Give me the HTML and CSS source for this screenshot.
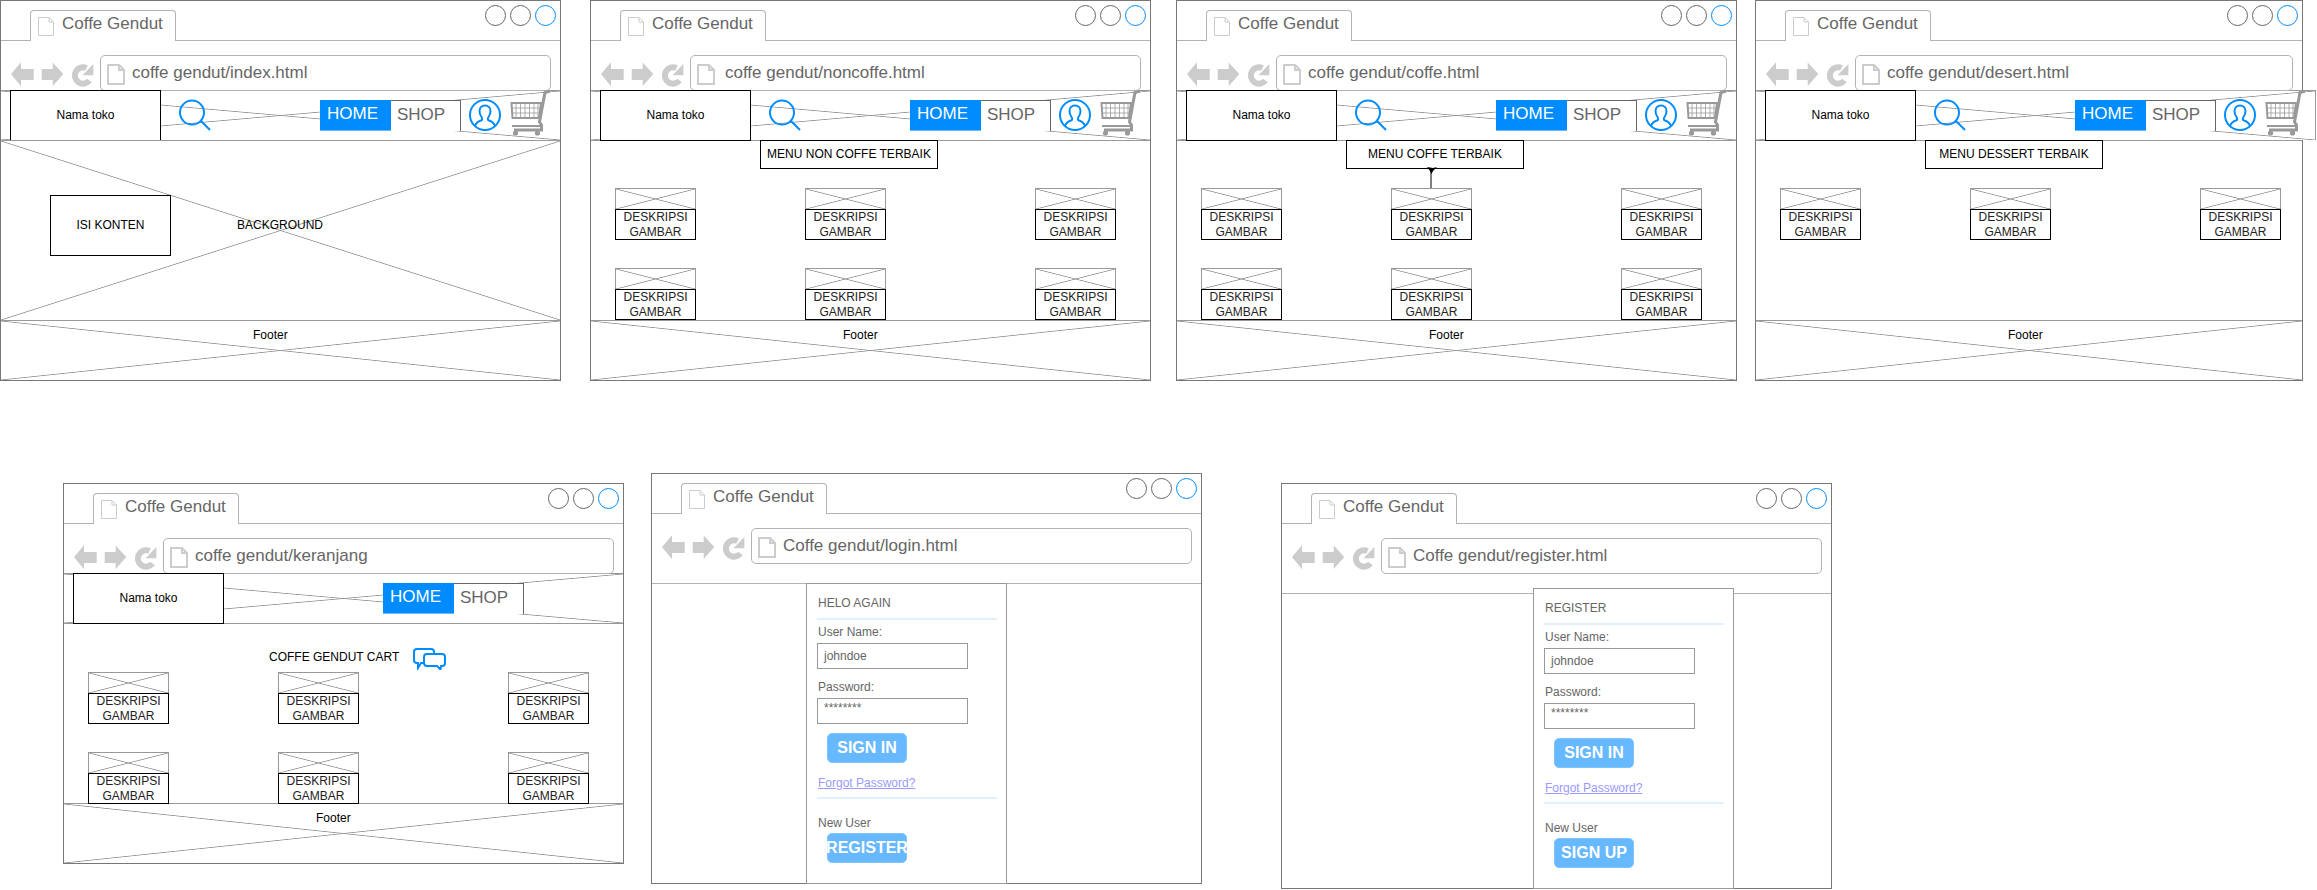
FILE: index.html
```html
<!DOCTYPE html>
<html lang="en">
<head>
  <meta charset="UTF-8">
  <meta name="viewport" content="width=device-width, initial-scale=1.0">
  <title>Coffe Gendut wireframes</title>
  <link rel="stylesheet" href="styles.css">
</head>
<body>

<!-- shared icons -->
<svg class="icon-defs" width="0" height="0">
  <symbol id="icon-browser" viewBox="0 0 90 30">
    <polygon fill="#ccc" points="1,14 11,2.3 11,9 23.7,9 23.7,20 11,20 11,26.3"/>
    <polygon fill="#ccc" points="31.7,9 42.7,9 42.7,2.5 53.3,14 42.7,26 42.7,20 31.7,20"/>
    <path fill="none" stroke="#ccc" stroke-width="6" d="M76.5 8 A8.2 8.2 0 1 0 79.5 20.5"/>
    <polygon fill="#ccc" points="83.4,4 83.4,15.3 72.5,15.3"/>
  </symbol>
  <symbol id="icon-page" viewBox="0 0 18 21">
    <path fill="#fff" stroke="#ccc" stroke-width="2" d="M1 1 H12 L17 6 V20 H1 Z M12 1 V6 H17"/>
  </symbol>
  <symbol id="icon-tabpage" viewBox="0 0 16 19">
    <path fill="#fff" stroke="#ccc" d="M.5 .5 H11 L15.5 5 V18.5 H.5 Z M11 .5 V5 H15.5"/>
  </symbol>
  <symbol id="icon-search" viewBox="0 0 34 34">
    <circle cx="13" cy="14.6" r="12" fill="none" stroke="#008cff" stroke-width="2"/>
    <line x1="22" y1="23" x2="31" y2="32" stroke="#008cff" stroke-width="2"/>
  </symbol>
  <symbol id="icon-user" viewBox="0 0 32 32">
    <circle cx="16" cy="16" r="15" fill="none" stroke="#008cff" stroke-width="2"/>
    <path fill="none" stroke="#008cff" stroke-width="2" d="M6 27 C7 23.5 9 22.5 12 21.5 C13.5 21 13.5 19.5 12.5 18 C11 16 10.5 14 10.5 12 C10.5 8.5 13 6.5 16 6.5 C19 6.5 21.5 8.5 21.5 12 C21.5 14 21 16 19.5 18 C18.5 19.5 18.5 21 20 21.5 C23 22.5 25 23.5 26 27"/>
  </symbol>
  <symbol id="icon-cart" viewBox="0 0 41 47">
    <path fill="none" stroke="#999" stroke-width="3" d="M40 1 L35 2.5 L29.5 32 L31.5 35 V40 H4"/>
    <path fill="none" stroke="#999" stroke-width="2" d="M2 36 H30"/>
    <path fill="#fff" stroke="#999" stroke-width="2" d="M1.5 13 H31 L29 28 H2.5 Z"/>
    <path fill="none" stroke="#999" stroke-width=".8" d="M6 13 V28 M10.5 13 V28 M15 13 V28 M19.5 13 V28 M24 13 V28 M28 13 V28 M2 18 H30 M2 23 H29.5"/>
    <circle cx="5.5" cy="43" r="2.6" fill="#999"/>
    <circle cx="27.5" cy="43" r="2.6" fill="#999"/>
  </symbol>
</svg>

<!-- index -->
<div class="window win-index">
  <div class="tab-row">
    <div class="tab"><svg class="tab-icon"><use href="#icon-tabpage"/></svg><span>Coffe Gendut</span></div>
    <div class="controls"><i></i><i></i><i class="active"></i></div>
  </div>
  <div class="url-row">
    <svg class="browser-icons"><use href="#icon-browser"/></svg>
    <div class="url-box"><svg class="page-icon"><use href="#icon-page"/></svg><span>coffe gendut/index.html</span></div>
  </div>
  <div class="site-header x-box">
    <div class="shop-box">Nama toko</div>
    <svg class="search-icon"><use href="#icon-search"/></svg>
    <div class="nav"><a class="nav-home">HOME</a><a class="nav-shop">SHOP</a></div>
    <svg class="user-icon"><use href="#icon-user"/></svg>
    <svg class="cart-icon"><use href="#icon-cart"/></svg>
  </div>
  <div class="page-body hero x-box">
    <div class="hero-box">ISI KONTEN</div>
    <span class="hero-label">BACKGROUND</span>
  </div>
  <div class="site-footer x-box">Footer</div>
</div>

<!-- noncoffe -->
<div class="window win-noncoffe">
  <div class="tab-row">
    <div class="tab"><svg class="tab-icon"><use href="#icon-tabpage"/></svg><span>Coffe Gendut</span></div>
    <div class="controls"><i></i><i></i><i class="active"></i></div>
  </div>
  <div class="url-row">
    <svg class="browser-icons"><use href="#icon-browser"/></svg>
    <div class="url-box"><svg class="page-icon"><use href="#icon-page"/></svg><span>coffe gendut/noncoffe.html</span></div>
  </div>
  <div class="site-header x-box">
    <div class="shop-box">Nama toko</div>
    <svg class="search-icon"><use href="#icon-search"/></svg>
    <div class="nav"><a class="nav-home">HOME</a><a class="nav-shop">SHOP</a></div>
    <svg class="user-icon"><use href="#icon-user"/></svg>
    <svg class="cart-icon"><use href="#icon-cart"/></svg>
  </div>
  <div class="page-body">
    <div class="section-head"><div class="menu-title">MENU NON COFFE TERBAIK</div></div>
    <div class="product-grid">
      <div class="product"><div class="product-img x-box"></div><div class="product-desc">DESKRIPSI GAMBAR</div></div>
      <div class="product"><div class="product-img x-box"></div><div class="product-desc">DESKRIPSI GAMBAR</div></div>
      <div class="product"><div class="product-img x-box"></div><div class="product-desc">DESKRIPSI GAMBAR</div></div>
      <div class="product"><div class="product-img x-box"></div><div class="product-desc">DESKRIPSI GAMBAR</div></div>
      <div class="product"><div class="product-img x-box"></div><div class="product-desc">DESKRIPSI GAMBAR</div></div>
      <div class="product"><div class="product-img x-box"></div><div class="product-desc">DESKRIPSI GAMBAR</div></div>
    </div>
  </div>
  <div class="site-footer x-box">Footer</div>
</div>

<!-- coffe -->
<div class="window win-coffe">
  <div class="tab-row">
    <div class="tab"><svg class="tab-icon"><use href="#icon-tabpage"/></svg><span>Coffe Gendut</span></div>
    <div class="controls"><i></i><i></i><i class="active"></i></div>
  </div>
  <div class="url-row">
    <svg class="browser-icons"><use href="#icon-browser"/></svg>
    <div class="url-box"><svg class="page-icon"><use href="#icon-page"/></svg><span>coffe gendut/coffe.html</span></div>
  </div>
  <div class="site-header x-box">
    <div class="shop-box">Nama toko</div>
    <svg class="search-icon"><use href="#icon-search"/></svg>
    <div class="nav"><a class="nav-home">HOME</a><a class="nav-shop">SHOP</a></div>
    <svg class="user-icon"><use href="#icon-user"/></svg>
    <svg class="cart-icon"><use href="#icon-cart"/></svg>
  </div>
  <div class="page-body">
    <div class="section-head">
      <div class="menu-title">MENU COFFE TERBAIK</div>
      <svg class="link-arrow" viewBox="0 0 12 22"><path d="M6 22 V3" stroke="#000" fill="none"/><path d="M2 0 L8 1 L12 0 L8 4 L6.5 7 L5 4 Z" fill="#000"/></svg>
    </div>
    <div class="product-grid">
      <div class="product"><div class="product-img x-box"></div><div class="product-desc">DESKRIPSI GAMBAR</div></div>
      <div class="product"><div class="product-img x-box"></div><div class="product-desc">DESKRIPSI GAMBAR</div></div>
      <div class="product"><div class="product-img x-box"></div><div class="product-desc">DESKRIPSI GAMBAR</div></div>
      <div class="product"><div class="product-img x-box"></div><div class="product-desc">DESKRIPSI GAMBAR</div></div>
      <div class="product"><div class="product-img x-box"></div><div class="product-desc">DESKRIPSI GAMBAR</div></div>
      <div class="product"><div class="product-img x-box"></div><div class="product-desc">DESKRIPSI GAMBAR</div></div>
    </div>
  </div>
  <div class="site-footer x-box">Footer</div>
</div>

<!-- desert -->
<div class="window win-desert">
  <div class="tab-row">
    <div class="tab"><svg class="tab-icon"><use href="#icon-tabpage"/></svg><span>Coffe Gendut</span></div>
    <div class="controls"><i></i><i></i><i class="active"></i></div>
  </div>
  <div class="url-row">
    <svg class="browser-icons"><use href="#icon-browser"/></svg>
    <div class="url-box"><svg class="page-icon"><use href="#icon-page"/></svg><span>coffe gendut/desert.html</span></div>
  </div>
  <div class="site-header x-box">
    <div class="shop-box">Nama toko</div>
    <svg class="search-icon"><use href="#icon-search"/></svg>
    <div class="nav"><a class="nav-home">HOME</a><a class="nav-shop">SHOP</a></div>
    <svg class="user-icon"><use href="#icon-user"/></svg>
    <svg class="cart-icon"><use href="#icon-cart"/></svg>
  </div>
  <div class="page-body">
    <div class="section-head"><div class="menu-title">MENU DESSERT TERBAIK</div></div>
    <div class="product-grid">
      <div class="product"><div class="product-img x-box"></div><div class="product-desc">DESKRIPSI GAMBAR</div></div>
      <div class="product"><div class="product-img x-box"></div><div class="product-desc">DESKRIPSI GAMBAR</div></div>
      <div class="product"><div class="product-img x-box"></div><div class="product-desc">DESKRIPSI GAMBAR</div></div>
    </div>
  </div>
  <div class="site-footer x-box">Footer</div>
</div>

<!-- keranjang -->
<div class="window win-cart">
  <div class="tab-row">
    <div class="tab"><svg class="tab-icon"><use href="#icon-tabpage"/></svg><span>Coffe Gendut</span></div>
    <div class="controls"><i></i><i></i><i class="active"></i></div>
  </div>
  <div class="url-row">
    <svg class="browser-icons"><use href="#icon-browser"/></svg>
    <div class="url-box"><svg class="page-icon"><use href="#icon-page"/></svg><span>coffe gendut/keranjang</span></div>
  </div>
  <div class="site-header x-box">
    <div class="shop-box">Nama toko</div>
    <div></div>
    <div class="nav"><a class="nav-home">HOME</a><a class="nav-shop">SHOP</a></div>
  </div>
  <div class="page-body">
    <div class="section-head cart-head">
      <span>COFFE GENDUT CART</span>
      <svg class="chat-icon" viewBox="0 0 33 22">
        <path fill="#fff" stroke="#008cff" stroke-width="2" d="M4 1 H18 Q21 1 21 4 V12 Q21 15 18 15 H8 L5 20 L5 15 H4 Q1 15 1 12 V4 Q1 1 4 1 Z"/>
        <path fill="#fff" stroke="#008cff" stroke-width="2" d="M14 6 H29 Q32 6 32 9 V15 Q32 18 29 18 H28 L27.5 21.5 L24 18 H14 Q11 18 11 15 V9 Q11 6 14 6 Z"/>
      </svg>
    </div>
    <div class="product-grid">
      <div class="product"><div class="product-img x-box"></div><div class="product-desc">DESKRIPSI GAMBAR</div></div>
      <div class="product"><div class="product-img x-box"></div><div class="product-desc">DESKRIPSI GAMBAR</div></div>
      <div class="product"><div class="product-img x-box"></div><div class="product-desc">DESKRIPSI GAMBAR</div></div>
      <div class="product"><div class="product-img x-box"></div><div class="product-desc">DESKRIPSI GAMBAR</div></div>
      <div class="product"><div class="product-img x-box"></div><div class="product-desc">DESKRIPSI GAMBAR</div></div>
      <div class="product"><div class="product-img x-box"></div><div class="product-desc">DESKRIPSI GAMBAR</div></div>
    </div>
  </div>
  <div class="site-footer x-box">Footer</div>
</div>

<!-- login -->
<div class="window win-login">
  <div class="tab-row">
    <div class="tab"><svg class="tab-icon"><use href="#icon-tabpage"/></svg><span>Coffe Gendut</span></div>
    <div class="controls"><i></i><i></i><i class="active"></i></div>
  </div>
  <div class="url-row url-row-tall">
    <svg class="browser-icons"><use href="#icon-browser"/></svg>
    <div class="url-box"><svg class="page-icon"><use href="#icon-page"/></svg><span>Coffe gendut/login.html</span></div>
  </div>
  <form class="login-panel">
    <h4 class="panel-title">HELO AGAIN</h4>
    <hr class="panel-rule">
    <label class="field-label">User Name:</label>
    <div class="field">johndoe</div>
    <label class="field-label field-label-next">Password:</label>
    <div class="field field-secret">********</div>
    <a class="blue-btn">SIGN IN</a>
    <a class="forgot-link">Forgot Password?</a>
    <hr class="panel-rule">
    <label class="field-label field-label-new">New User</label>
    <a class="blue-btn blue-btn-low">REGISTER</a>
  </form>
</div>

<!-- register -->
<div class="window win-register">
  <div class="tab-row">
    <div class="tab"><svg class="tab-icon"><use href="#icon-tabpage"/></svg><span>Coffe Gendut</span></div>
    <div class="controls"><i></i><i></i><i class="active"></i></div>
  </div>
  <div class="url-row url-row-tall">
    <svg class="browser-icons"><use href="#icon-browser"/></svg>
    <div class="url-box"><svg class="page-icon"><use href="#icon-page"/></svg><span>Coffe gendut/register.html</span></div>
  </div>
  <form class="login-panel">
    <h4 class="panel-title">REGISTER</h4>
    <hr class="panel-rule">
    <label class="field-label">User Name:</label>
    <div class="field">johndoe</div>
    <label class="field-label field-label-next">Password:</label>
    <div class="field field-secret">********</div>
    <a class="blue-btn">SIGN IN</a>
    <a class="forgot-link">Forgot Password?</a>
    <hr class="panel-rule">
    <label class="field-label field-label-new">New User</label>
    <a class="blue-btn blue-btn-low">SIGN UP</a>
  </form>
</div>

</body>
</html>
```

FILE: styles.css
```css
* {
  box-sizing: border-box;
}

body {
  margin: 0;
  width: 2317px;
  height: 890px;
  position: relative;
  overflow: hidden;
  background: #fff;
  font-family: "Liberation Sans", Arial, sans-serif;
  font-size: 12px;
  color: #000;
}

.icon-defs {
  position: absolute;
}

/* the windows sit on a free canvas */
.window {
  position: absolute;
  width: 561px;
  height: 381px;
  background: #fff;
  border: 1px solid #777;
}

.win-index { left: 0; top: 0; }
.win-noncoffe { left: 590px; top: 0; }
.win-coffe { left: 1176px; top: 0; }
.win-desert { left: 1755px; top: 0; width: 548px; }
.win-cart { left: 63px; top: 483px; }
.win-login { left: 651px; top: 473px; width: 551px; height: 411px; }
.win-register { left: 1281px; top: 483px; width: 551px; height: 406px; }

/* crossed placeholder box */
.x-box {
  --x-line: #949494;
  background-color: #fff;
  background-image:
    linear-gradient(to top right, transparent calc(50% - .8px), var(--x-line) 50%, transparent calc(50% + .8px)),
    linear-gradient(to bottom right, transparent calc(50% - .8px), var(--x-line) 50%, transparent calc(50% + .8px));
}

/* browser chrome */
.tab-row {
  display: flex;
  height: 40px;
  padding-left: 29px;
  border-bottom: 1px solid #b3b3b3;
}

.tab {
  display: flex;
  width: 146px;
  height: 31px;
  margin-top: 9px;
  padding-left: 7px;
  background: #fff;
  border: 1px solid #b3b3b3;
  border-bottom: 0;
  border-radius: 4px 4px 0 0;
  font-size: 17px;
  line-height: 26px;
  color: #666;
}

.tab-icon {
  width: 16px;
  height: 19px;
  margin: 6px 8px 0 0;
}

.controls {
  display: flex;
  gap: 4px;
  margin: 4px 4px 0 auto;
}

.controls i {
  width: 21px;
  height: 21px;
  border: 1px solid #666;
  border-radius: 50%;
}

.controls .active {
  border-color: #008cff;
}

.url-row {
  display: flex;
  height: 49px;
  padding: 14px 9px 0;
}

.url-row-tall {
  height: 70px;
  border-bottom: 1px solid #b3b3b3;
}

.browser-icons {
  flex: none;
  width: 90px;
  height: 30px;
  margin-top: 5px;
}

.url-box {
  flex: 1;
  display: flex;
  align-items: center;
  height: 36px;
  border: 1px solid #b3b3b3;
  border-radius: 5px;
  font-size: 17px;
  color: #666;
}

.page-icon {
  width: 18px;
  height: 21px;
  margin: 2px 7px 0 6px;
}

.win-noncoffe .page-icon {
  margin-right: 10px;
}

/* site header */
.site-header {
  display: grid;
  grid-template-columns: 151px 159px 141px 49px 50px;
  align-items: start;
  height: 50px;
  padding-left: 9px;
  border-top: 1px solid #999;
}

.win-desert .site-header {
  width: 560px;
  border-right: 1px solid #999;
}

.shop-box {
  position: relative;
  height: 51px;
  margin-top: -1px;
  background: #fff;
  border: 1px solid #000;
  line-height: 49px;
  text-align: center;
}

.search-icon {
  width: 34px;
  height: 34px;
  margin: 7px 0 0 18px;
}

.nav {
  display: flex;
  margin-top: 9px;
  font-size: 17px;
  line-height: 28px;
}

.nav-home {
  width: 71px;
  height: 31px;
  padding-left: 7px;
  background: #008cff;
  border-bottom: 1px solid #66b8ff;
  color: #fff;
}

.nav-shop {
  width: 70px;
  height: 31px;
  padding-left: 6px;
  background: #fff;
  border-top: 1px solid #666;
  border-right: 1px solid #666;
  color: #666;
  line-height: 27px;
}

.user-icon {
  width: 32px;
  height: 32px;
  margin: 8px 0 0 8px;
}

.cart-icon {
  width: 41px;
  height: 47px;
  margin: -1px 0 0 0;
}

/* page body */
.page-body {
  height: 180px;
  border-top: 1px solid #999;
}

.hero {
  position: relative;
  z-index: 1;
  display: flex;
  padding: 54px 0 0 49px;
}

.hero-box {
  width: 121px;
  height: 61px;
  background: #fff;
  border: 1px solid #000;
  line-height: 59px;
  text-align: center;
}

.hero-label {
  margin: 23px 0 0 66px;
  line-height: 14px;
}

.section-head {
  position: relative;
  height: 48px;
  padding-left: 169px;
}

.menu-title {
  width: 178px;
  height: 29px;
  margin-top: -1px;
  background: #fff;
  border: 1px solid #000;
  line-height: 26px;
  text-align: center;
}

.link-arrow {
  position: absolute;
  left: 248px;
  top: 27px;
  width: 12px;
  height: 22px;
}

.cart-head {
  display: flex;
  align-items: flex-start;
  padding-left: 205px;
  line-height: 14px;
}

.cart-head span {
  margin-top: 26px;
}

.chat-icon {
  width: 33px;
  height: 22px;
  margin: 24px 0 0 14px;
}

.product-grid {
  display: grid;
  grid-template-columns: 190px 230px 81px;
  row-gap: 28px;
  padding-left: 24px;
}

.product {
  position: relative;
  width: 81px;
}

.product-img {
  height: 21px;
  border: 1px solid #999;
  border-bottom: 0;
}

.product-desc {
  height: 31px;
  background: #fff;
  border: 1px solid #000;
  line-height: 15px;
  text-align: center;
  color: #222;
}

.site-footer {
  position: relative;
  height: 60px;
  padding: 7px 0 0 252px;
  border-top: 1px solid #999;
  line-height: 14px;
}

.product {
  z-index: 1;
}

/* login and register panel */
.login-panel {
  position: relative;
  width: 201px;
  height: 301px;
  margin: -1px 0 0 154px;
  padding: 0 10px;
  background: #fff;
  border: 1px solid #999;
  color: #666;
}

.win-register .login-panel {
  margin: -6px 0 0 251px;
}

.panel-title {
  margin: 0 0 0 1px;
  padding-top: 12px;
  font-size: 12px;
  font-weight: normal;
  line-height: 14px;
}

.panel-rule {
  width: 180px;
  height: 2px;
  margin: 8px 0 0;
  background: #e1f0ff;
  border: 0;
}

.forgot-link + .panel-rule {
  margin-top: 7px;
}

.field-label {
  display: block;
  margin: 5px 0 0 1px;
  line-height: 14px;
}

.field-label-next {
  margin-top: 11px;
}

.field-label-new {
  margin-top: 17px;
}

.field {
  width: 151px;
  height: 26px;
  margin-top: 4px;
  padding-left: 6px;
  border: 1px solid #999;
  line-height: 24px;
}

.field-secret {
  line-height: 18px;
}

.blue-btn {
  display: block;
  width: 80px;
  height: 30px;
  margin: 9px 0 0 10px;
  background: #66b8ff;
  border: 1px solid #80c4ff;
  border-radius: 5px;
  font-size: 16px;
  font-weight: bold;
  line-height: 28px;
  text-align: center;
  color: #fff;
  white-space: nowrap;
}

.blue-btn-low {
  margin-top: 3px;
  display: flex;
  justify-content: center;
}

.forgot-link {
  display: block;
  margin: 13px 0 0 1px;
  line-height: 14px;
  color: #9999ff;
  text-decoration: underline;
}
```
